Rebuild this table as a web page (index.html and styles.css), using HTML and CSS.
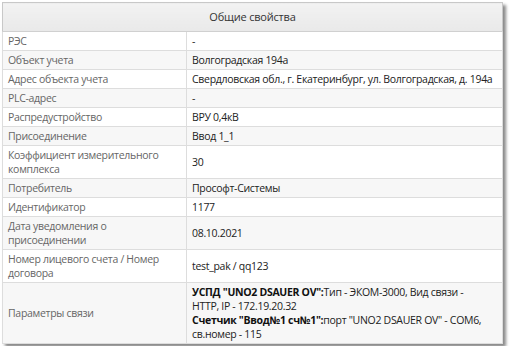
FILE: index.html
```html
<!DOCTYPE html>
<html>
<head>
<meta charset="utf-8">
<link rel="stylesheet" href="styles.css">
</head>
<body>
<div class="wrap">
<table class="props">
  <thead>
    <tr><th colspan="2">Общие свойства</th></tr>
  </thead>
  <tbody>
    <tr><td class="k">РЭС</td><td class="v">-</td></tr>
    <tr><td class="k">Объект учета</td><td class="v">Волгоградская 194а</td></tr>
    <tr><td class="k">Адрес объекта учета</td><td class="v">Свердловская обл., г. Екатеринбург, ул. Волгоградская, д. 194а</td></tr>
    <tr><td class="k">PLC-адрес</td><td class="v">-</td></tr>
    <tr><td class="k">Распредустройство</td><td class="v">ВРУ 0,4кВ</td></tr>
    <tr><td class="k">Присоединение</td><td class="v">Ввод 1_1</td></tr>
    <tr><td class="k">Коэффициент измерительного комплекса</td><td class="v">30</td></tr>
    <tr><td class="k">Потребитель</td><td class="v">Прософт-Системы</td></tr>
    <tr><td class="k">Идентификатор</td><td class="v">1177</td></tr>
    <tr><td class="k">Дата уведомления о присоединении</td><td class="v">08.10.2021</td></tr>
    <tr><td class="k">Номер лицевого счета / Номер договора</td><td class="v">test_pak / qq123</td></tr>
    <tr><td class="k">Параметры связи</td><td class="v"><b>УСПД "UNO2 DSAUER OV":</b>Тип - ЭКОМ-3000, Вид связи -<br>HTTP, IP - 172.19.20.32<br><b>Счетчик "Ввод№1 сч№1":</b>порт "UNO2 DSAUER OV" - COM6,<br>св.номер - 115</td></tr>
  </tbody>
</table>
</div>
</body>
</html>
```
FILE: styles.css
```css
html, body {
  margin: 0;
  padding: 0;
  background: #ffffff;
}
.wrap {
  padding: 2px;
}
.props {
  width: 501px;
  border-collapse: collapse;
  border: 1px solid #c8c8c8;
  box-shadow: 3px 3px 3px #8a8a8a;
  font-family: "Open Sans", "Liberation Sans", sans-serif;
  font-size: 10.5px;
  letter-spacing: -0.3px;
  line-height: 14px;
  color: #333333;
}
.props th {
  height: 28px;
  padding: 0;
  font-size: 11px;
  letter-spacing: -0.2px;
  font-weight: normal;
  text-align: center;
  color: #333333;
  background: linear-gradient(#f2f2f2, #e9e9e9);
  border-bottom: 1px solid #d0d0d0;
}
.props td {
  padding: 2px 4px 2px 5px;
  border: 1px solid #dddddd;
  vertical-align: middle;
}
.props td.k {
  width: 174px;
  color: #666666;
}
.props td.v {
  color: #222222;
}
.props tbody tr:nth-child(even) td {
  background: #f7f7f7;
}
.props b {
  font-weight: bold;
  color: #111111;
}
```
